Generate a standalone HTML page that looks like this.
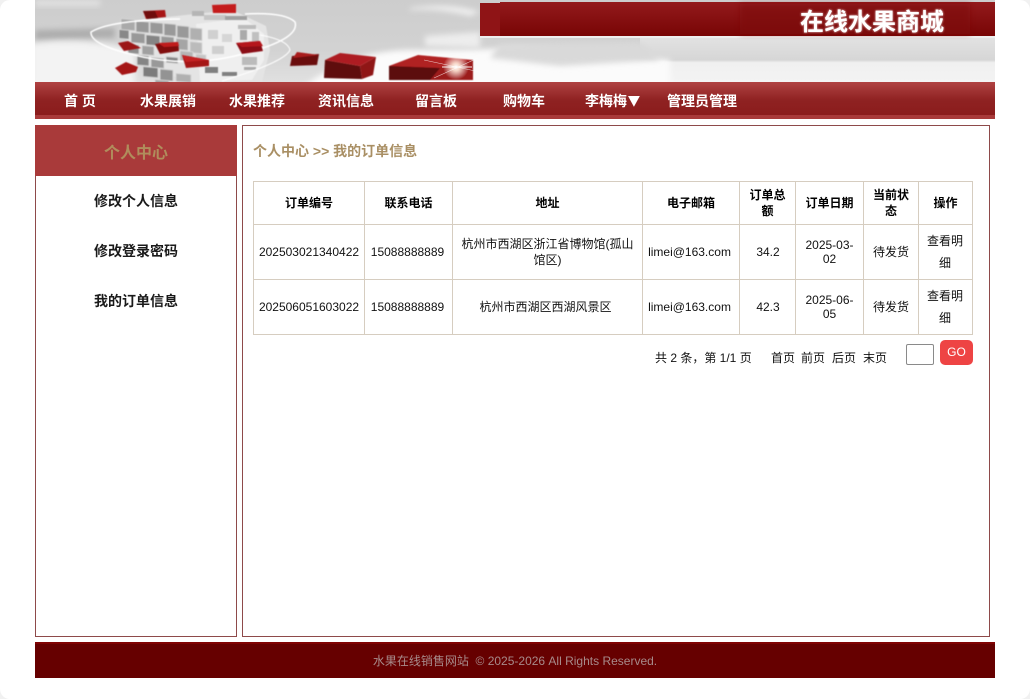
<!DOCTYPE html>
<html lang="zh"><head><meta charset="utf-8"><title>在线水果商城</title>
<style>
html,body{margin:0;padding:0;width:1030px;height:699px;overflow:hidden;background:#f1f1f1}
*{box-sizing:border-box}
body{font-family:"Liberation Sans","Noto Sans CJK SC",sans-serif;font-size:12px;color:#111}
#page{position:absolute;left:0;top:0;width:1030px;height:699px;background:#fff;border-radius:10px;overflow:hidden}
.a{position:absolute;white-space:nowrap}
#nav{position:absolute;left:35px;top:82px;width:960px;height:37px;background:linear-gradient(#b04242 0,#8f2222 18px,#8b1c1c 33px,#a93a3a 33px,#a93a3a 37px)}
.n{position:absolute;top:91px;height:20px;line-height:20px;color:#fff;font-weight:bold;font-size:14px;white-space:nowrap}
#side{position:absolute;left:35px;top:125px;width:202px;height:512px;border:1px solid #8e4a4a;background:#fff}
#sh{position:absolute;left:-1px;top:-1px;width:202px;height:51px;background:#a93a3a;color:#b08d5c;font-weight:bold;font-size:16px;text-align:center;line-height:57px}
.sl{position:absolute;left:0;width:200px;text-align:center;font-weight:bold;font-size:14px;height:20px;line-height:20px;color:#1a1a1a}
#main{position:absolute;left:242px;top:125px;width:748px;height:512px;border:1px solid #8e4a4a;background:#fff}
#crumb{position:absolute;left:253px;top:141px;height:20px;line-height:20px;font-size:14px;font-weight:bold;color:#a98f64;white-space:nowrap}
table{position:absolute;left:253px;top:181px;width:719px;border-collapse:collapse;table-layout:fixed}
td,th{border:1px solid #d6cdc0;text-align:center;padding:0 5px;font-size:12px;line-height:16px;color:#111}
th{height:43px;font-weight:bold;color:#000}
td{height:55px}
td.d{line-height:14px}
td.o{line-height:22px;padding:0 4px 0 3px}
#go{position:absolute;left:940px;top:340px;width:33px;height:25px;background:#ee4444;border-radius:5px;color:#fff;text-align:center;line-height:25px;font-size:12px}
#ipt{position:absolute;left:906px;top:344px;width:28px;height:21px;border:1px solid #8a8a8a;border-radius:2px;background:#fff}
#foot{position:absolute;left:35px;top:642px;width:960px;height:36px;background:#660000;border-top:2px solid #800303;color:#a78a8a;text-align:center;font-size:12px;line-height:35px}
</style></head><body><div id="page">
<svg class="a" style="left:35px;top:0" width="960" height="82" viewBox="35 0 960 82">
<defs>
<linearGradient id="g" x1="0" y1="0" x2="0" y2="1"><stop offset="0" stop-color="#cdcdcd"/><stop offset=".6" stop-color="#d2d2d2"/><stop offset="1" stop-color="#e0e0e0"/></linearGradient>
<linearGradient id="gr" x1="0" y1="0" x2="0" y2="1"><stop offset="0" stop-color="#e2e2e2"/><stop offset=".5" stop-color="#d6d6d6"/><stop offset=".56" stop-color="#f0f0f0"/><stop offset="1" stop-color="#f3f3f3"/></linearGradient>
<linearGradient id="rb" x1="0" y1="0" x2="0" y2="1"><stop offset="0" stop-color="#931a1c"/><stop offset="1" stop-color="#780505"/></linearGradient>
<radialGradient id="st"><stop offset="0" stop-color="#fff"/><stop offset=".3" stop-color="#ffe8d8" stop-opacity=".9"/><stop offset="1" stop-color="#fff" stop-opacity="0"/></radialGradient>
<filter id="b" x="-20%" y="-50%" width="140%" height="200%"><feGaussianBlur stdDeviation="3"/></filter>
<filter id="b1"><feGaussianBlur stdDeviation=".5"/></filter>
</defs>
<rect x="35" y="0" width="960" height="82" fill="url(#g)"/>
<rect x="640" y="38" width="355" height="44" fill="url(#gr)"/>
<path d="M35 30 L115 28 L115 38 L35 40Z" fill="#adadad" filter="url(#b)"/>
<path d="M30 44 Q80 36 135 50 L135 90 L30 90Z" fill="#f3f3f3" filter="url(#b)"/>
<path d="M35 0 H100 V6 H35Z" fill="#e2e2e2" filter="url(#b)"/>
<path d="M300 90 Q350 48 420 50 Q470 50 520 48 L670 60 L670 90Z" fill="#fbfbfb" filter="url(#b)"/>
<path d="M500 44 L640 42 L660 60 L560 66 L490 58Z" fill="#d9d9d9" filter="url(#b)"/>
<path d="M410 8 Q450 2 480 12 L470 16 Q440 8 410 10Z" fill="#efefef" filter="url(#b)"/>
<path d="M425 36 L480 32 L480 48 L425 46Z" fill="#ededed" filter="url(#b)"/>
<path d="M120 22 L195 14 L232 10 L266 26 L270 50 L262 82 L195 82 L150 70 L128 44Z" fill="#e4e4e4" filter="url(#b1)"/>
<path d="M196 24 L244 18 L264 34 L264 60 L252 80 L200 82Z" fill="#efefef" filter="url(#b1)"/>
<g transform="translate(0,-13) skewY(5)" fill="#999" stroke="#d8d8d8" stroke-width=".8" filter="url(#b1)">
<rect x="121" y="21" width="14" height="11" fill="#aaa"/><rect x="136" y="22" width="13" height="11"/><rect x="150" y="22" width="13" height="11"/><rect x="164" y="22" width="12" height="12"/><rect x="177" y="23" width="12" height="12"/><rect x="190" y="24" width="12" height="12" fill="#b0b0b0"/>
<rect x="119" y="32" width="10" height="9" fill="#888"/><rect x="131" y="34" width="14" height="10"/><rect x="146" y="35" width="14" height="10" fill="#858585"/><rect x="161" y="35" width="13" height="11"/><rect x="176" y="36" width="12" height="11" fill="#a5a5a5"/><rect x="190" y="38" width="12" height="11" fill="#bbb"/>
<rect x="128" y="46" width="11" height="9" fill="#8f8f8f"/><rect x="142" y="46" width="12" height="9" fill="#a0a0a0"/><rect x="180" y="48" width="13" height="10" fill="#b5b5b5"/><rect x="196" y="50" width="10" height="10" fill="#c5c5c5"/>
<rect x="137" y="56" width="12" height="10" fill="#858585"/><rect x="151" y="57" width="13" height="10"/><rect x="166" y="55" width="12" height="6" fill="#858585"/>
<rect x="143" y="67" width="15" height="10" fill="#7c7c7c"/><rect x="160" y="68" width="13" height="11" fill="#939393"/><rect x="176" y="71" width="15" height="8" fill="#b0b0b0"/><rect x="155" y="79" width="14" height="8" fill="#a5a5a5"/><rect x="172" y="81" width="17" height="8" fill="#b5b5b5"/>
</g>
<g filter="url(#b1)">
<rect x="192" y="11" width="12" height="5" fill="#b5b5b5"/><rect x="204" y="15" width="22" height="5" fill="#c6c6c6"/><rect x="225" y="16" width="22" height="4" fill="#a0a0a0"/><rect x="238" y="25" width="18" height="4" fill="#bcbcbc"/>
<rect x="240" y="30" width="7" height="10" fill="#aaa"/><rect x="252" y="32" width="7" height="10" fill="#c0c0c0"/><rect x="208" y="30" width="10" height="9" fill="#d0d0d0"/><rect x="222" y="34" width="10" height="8" fill="#d6d6d6"/><rect x="212" y="46" width="12" height="8" fill="#cfcfcf"/><rect x="242" y="57" width="15" height="8" fill="#bbb"/><rect x="205" y="67" width="13" height="6" fill="#808080"/><rect x="222" y="72" width="15" height="4" fill="#808080"/><rect x="244" y="67" width="12" height="3" fill="#aaa"/>
</g>
<g fill="none" stroke="#fff" filter="url(#b1)">
<path d="M180 19 Q110 20 91 32 Q90 44 130 54 Q190 70 250 52 Q300 38 295 22 Q285 12 245 14" stroke-width="1.5"/>
<path d="M222 81 Q285 62 290 50 Q288 40 260 35" stroke-width="1"/>
</g>
<g filter="url(#b1)">
<path d="M143 11 L165 10 L166 17 L146 19Z" fill="#a81618"/><path d="M143 11 L147 19 L158 18 L155 11Z" fill="#6f0b0e"/>
<path d="M212 5 L236 4 L236 13 L213 13Z" fill="#c41b1f"/>
<path d="M155 44 L178 42 L179 51 L160 54Z" fill="#800d10"/><path d="M158 43 L178 42 L179 46 L164 47Z" fill="#c01c1f"/>
<path d="M236 43 L260 41 L263 51 L242 54Z" fill="#8a1014"/><path d="M236 43 L260 41 L263 46 L242 47Z" fill="#b5181c"/>
<path d="M182 55 L209 60 L209 66 L186 68Z" fill="#a51418"/><path d="M182 55 L209 60 L186 62Z" fill="#c42024"/>
<path d="M118 43 L128 41 L141 48 L124 51Z" fill="#9c1216"/>
<path d="M115 68 L126 62 L138 67 L136 72 L122 75Z" fill="#a51418"/>
<path d="M292 56 L319 54 L317 65 L290 66Z" fill="#6b0a0c"/><path d="M297 52 L319 55 L293 58Z" fill="#a91a1c"/>
<path d="M325 60 L360 66 L362 79 L324 78Z" fill="#5e0808"/><path d="M360 66 L376 57 L373 75 L362 79Z" fill="#8f1518"/><path d="M325 60 L340 53 L376 57 L360 66Z" fill="#ad1f20"/>
<path d="M389 66 L473 60 L473 80 L389 80Z" fill="#5c0808"/><path d="M389 66 L418 55 L473 60 L440 68Z" fill="#b02022"/><path d="M440 68 L473 60 L473 80 L430 80Z" fill="#9c1a1c"/>
</g>
<circle cx="456" cy="67" r="13" fill="url(#st)"/>
<g stroke="#fff" stroke-width=".6" opacity=".75"><path d="M424 60 L480 72"/><path d="M434 78 L478 58"/><path d="M442 67 L472 67" stroke-width="1.3"/></g>
<rect x="480" y="36" width="515" height="2" fill="#eee"/>
<rect x="480" y="3" width="20" height="33" fill="#8f1416"/>
<rect x="500" y="2" width="495" height="34" fill="url(#rb)"/>
<rect x="740" y="4" width="230" height="30" fill="#7e0708" opacity=".6" filter="url(#b)"/>
</svg>
<div class="a" style="left:800px;top:8px;font-size:24px;line-height:30px;font-weight:bold;color:#fff;text-shadow:0 0 2px #f4dcdc">在线水果商城</div>
<div id="nav"></div>
<div class="n" style="left:64px">首 页</div>
<div class="n" style="left:140px">水果展销</div>
<div class="n" style="left:229px">水果推荐</div>
<div class="n" style="left:318px">资讯信息</div>
<div class="n" style="left:415px">留言板</div>
<div class="n" style="left:503px">购物车</div>
<div class="n" style="left:585px">李梅梅<span style="font-family:'DejaVu Sans',sans-serif;font-size:14px;font-weight:normal;display:inline-block;width:14px;position:relative;left:1px;top:-1px;transform:scaleX(1.1);transform-origin:left">▼</span></div>
<div class="n" style="left:667px">管理员管理</div>
<div id="side"><div id="sh">个人中心</div>
<div class="sl" style="top:65px">修改个人信息</div>
<div class="sl" style="top:115px">修改登录密码</div>
<div class="sl" style="top:165px">我的订单信息</div>
</div>
<div id="main"></div>
<div id="crumb">个人中心 &gt;&gt; 我的订单信息</div>
<table>
<colgroup><col style="width:111px"><col style="width:88px"><col style="width:190px"><col style="width:97px"><col style="width:56px"><col style="width:68px"><col style="width:55px"><col style="width:54px"></colgroup>
<tr><th>订单编号</th><th>联系电话</th><th>地址</th><th>电子邮箱</th><th style="line-height:16px">订单总额</th><th>订单日期</th><th>当前状态</th><th>操作</th></tr>
<tr><td style="padding:0">202503021340422</td><td style="padding:0 2px 0 0">15088888889</td><td>杭州市西湖区浙江省博物馆(孤山馆区)</td><td style="padding:0 3px 0 0">limei@163.com</td><td style="padding:0 4px 0 5px">34.2</td><td class="d">2025-03-02</td><td>待发货</td><td class="o">查看明细</td></tr>
<tr><td style="padding:0">202506051603022</td><td style="padding:0 2px 0 0">15088888889</td><td style="padding:0 9px 0 5px">杭州市西湖区西湖风景区</td><td style="padding:0 3px 0 0">limei@163.com</td><td style="padding:0 4px 0 5px">42.3</td><td class="d">2025-06-05</td><td>待发货</td><td class="o">查看明细</td></tr>
</table>
<div class="a" style="left:655px;top:349px;line-height:18px">共 2 条，第 1/1 页</div>
<div class="a" style="left:771px;top:349px;line-height:18px">首页</div>
<div class="a" style="left:801px;top:349px;line-height:18px">前页</div>
<div class="a" style="left:832px;top:349px;line-height:18px">后页</div>
<div class="a" style="left:863px;top:349px;line-height:18px">末页</div>
<div id="ipt"></div><div id="go">GO</div>
<div id="foot">水果在线销售网站&nbsp; © 2025-2026 All Rights Reserved.</div>
</div></body></html>
